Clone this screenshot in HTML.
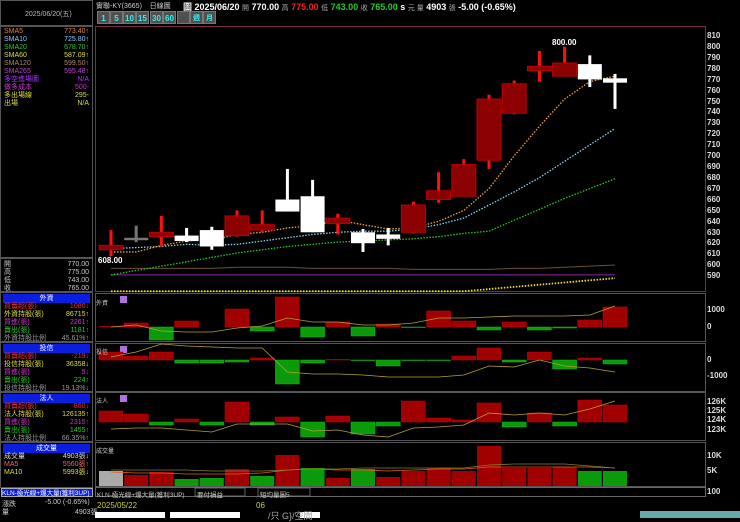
<!DOCTYPE html>
<html><head><meta charset="utf-8">
<style>
*{margin:0;padding:0;box-sizing:border-box}
body{width:740px;height:518px;background:#000;overflow:hidden;position:relative;font-family:"Liberation Sans","Noto Sans CJK TC",sans-serif;font-size:7px;color:#ccc}
.a{position:absolute;white-space:nowrap}
.lp{position:absolute;left:0;width:93px;border:1px solid #555}
.row{position:absolute;left:3px;right:3px;height:8px;line-height:8px;font-size:7px}
.row span{position:absolute;right:0}
.hd{position:absolute;left:2px;right:2px;height:9px;background:#0a1ee0;color:#fff;text-align:center;line-height:9px;font-size:7px}
.btn{position:absolute;top:11px;height:13px;width:13px;background:#505050;color:#3ee;font-size:8px;font-weight:bold;text-align:center;line-height:13px;border:1px solid #777}
.ax{position:absolute;left:707px;font-size:8px;line-height:10px;color:#ddd;font-weight:bold}
</style></head><body>
<div class="lp" style="top:0;height:26px"><div class="a" style="left:24px;top:8px;color:#bbb">2025/06/20(五)</div></div>
<div class="lp" style="top:26px;height:232px">
<div class="row" style="top:1px;color:#e08040">SMA5<span>773.40↑</span></div>
<div class="row" style="top:9px;color:#8cf">SMA10<span>725.80↑</span></div>
<div class="row" style="top:17px;color:#2c2">SMA20<span>678.70↑</span></div>
<div class="row" style="top:25px;color:#dd4">SMA60<span>587.09↑</span></div>
<div class="row" style="top:33px;color:#a86">SMA120<span>599.50↑</span></div>
<div class="row" style="top:41px;color:#b4c">SMA265<span>595.48↑</span></div>
<div class="row" style="top:49px;color:#a3f">多空進場圖<span>N/A</span></div>
<div class="row" style="top:57px;color:#c3c">做多成本<span>500-</span></div>
<div class="row" style="top:65px;color:#dd4">多出場線<span>295-</span></div>
<div class="row" style="top:73px;color:#dd4">出場<span>N/A</span></div>
</div>
<div class="lp" style="top:258px;height:34px;color:#ccc">
<div class="row" style="top:2px">開<span>770.00</span></div>
<div class="row" style="top:10px">高<span>775.00</span></div>
<div class="row" style="top:18px">低<span>743.00</span></div>
<div class="row" style="top:26px">收<span>765.00</span></div>
</div>
<div class="lp" style="top:292px;height:50px">
<div class="hd" style="top:1px">外資</div>
<div class="row" style="top:10px;color:#e33">買賣超(張)<span>1080↓</span></div>
<div class="row" style="top:18px;color:#dd4">外資持股(張)<span>86715↑</span></div>
<div class="row" style="top:26px;color:#c3c">買進(張)<span>2261↑</span></div>
<div class="row" style="top:34px;color:#2c2">賣出(張)<span>1181↑</span></div>
<div class="row" style="top:42px;color:#999">外資持股比例<span>45.61%↑</span></div>
</div>
<div class="lp" style="top:342px;height:50px">
<div class="hd" style="top:1px">投信</div>
<div class="row" style="top:10px;color:#e33">買賣超(張)<span>-219↓</span></div>
<div class="row" style="top:18px;color:#dd4">投信持股(張)<span>36358↓</span></div>
<div class="row" style="top:26px;color:#c3c">買進(張)<span>5↓</span></div>
<div class="row" style="top:34px;color:#2c2">賣出(張)<span>224↑</span></div>
<div class="row" style="top:42px;color:#999">投信持股比例<span>19.13%↓</span></div>
</div>
<div class="lp" style="top:392px;height:50px">
<div class="hd" style="top:1px">法人</div>
<div class="row" style="top:10px;color:#e33">買賣超(張)<span>860↓</span></div>
<div class="row" style="top:18px;color:#dd4">法人持股(張)<span>126135↑</span></div>
<div class="row" style="top:26px;color:#c3c">買進(張)<span>2315↑</span></div>
<div class="row" style="top:34px;color:#2c2">賣出(張)<span>1455↑</span></div>
<div class="row" style="top:42px;color:#999">法人持股比例<span>66.35%↑</span></div>
</div>
<div class="lp" style="top:442px;height:46px">
<div class="hd" style="top:1px">成交量</div>
<div class="row" style="top:10px;color:#ddd">成交量<span>4903張↓</span></div>
<div class="row" style="top:18px;color:#e66">MA5<span>5560張↑</span></div>
<div class="row" style="top:26px;color:#dd4">MA10<span>5993張↓</span></div>
</div>
<div class="a" style="left:1px;top:488px;width:92px;height:9px;background:#0a1ee0;color:#fff;font-size:6.5px;line-height:9px;border:1px solid #aaa">KLN-極光線+爆大量(獲利3UP)</div>
<div class="a" style="left:2px;top:499px;color:#ccc">漲跌</div><div class="a" style="left:45px;top:499px;color:#ccc">-5.00 (-0.65%)</div>
<div class="a" style="left:2px;top:507px;color:#ccc">量</div><div class="a" style="left:75px;top:507px;color:#ccc">4903張</div>

<div class="a" style="left:96px;top:1px;font-size:7px;color:#ccc">實聯-KY(3665)&nbsp;&nbsp;&nbsp;&nbsp;日線圖</div>
<div class="a" style="left:183px;top:0px;font-size:9px;font-weight:bold;color:#fff">圖 2025/06/20 <span style="font-size:7px;font-weight:normal;color:#aaa">開</span> 770.00 <span style="font-size:7px;font-weight:normal;color:#aaa">高</span> <span style="color:#e22">775.00</span> <span style="font-size:7px;font-weight:normal;color:#aaa">低</span> <span style="color:#2c2">743.00</span> <span style="font-size:7px;font-weight:normal;color:#aaa">收</span> <span style="color:#2c2">765.00</span> s <span style="font-size:7px;font-weight:normal;color:#aaa">元 量</span> 4903 <span style="font-size:7px;font-weight:normal;color:#aaa">張</span> -5.00 (-0.65%)</div>
<div class="btn" style="left:97px">1</div><div class="btn" style="left:110px">5</div><div class="btn" style="left:123px">10</div><div class="btn" style="left:136px">15</div><div class="btn" style="left:150px">30</div><div class="btn" style="left:163px">60</div><div class="btn" style="left:177px;color:#333">▫</div><div class="btn" style="left:190px;font-size:7px">週</div><div class="btn" style="left:203px;font-size:7px">月</div>

<svg class="a" style="left:0;top:0" width="740" height="518" id="s">
<rect x="95.5" y="26.5" width="610" height="265" fill="none" stroke="#7a2a4a"/>
<rect x="95.5" y="293.5" width="610" height="48" fill="none" stroke="#555"/>
<rect x="95.5" y="343.5" width="610" height="48" fill="none" stroke="#555"/>
<rect x="95.5" y="392.5" width="610" height="48" fill="none" stroke="#555"/>
<rect x="95.5" y="442.5" width="610" height="44" fill="none" stroke="#555"/>
<rect x="95.5" y="487.5" width="610" height="9" fill="none" stroke="#666"/>
<rect x="195" y="488" width="50" height="8" fill="#000" stroke="#888" stroke-width=".7"/>
<rect x="258" y="488" width="52" height="8" fill="#000" stroke="#888" stroke-width=".7"/>
<rect x="120" y="296" width="7" height="7" fill="#b070e0"/><rect x="120" y="346" width="7" height="7" fill="#b070e0"/><rect x="120" y="395" width="7" height="7" fill="#b070e0"/>
<rect x="95" y="512" width="70" height="6" fill="#fff"/><rect x="170" y="512" width="70" height="6" fill="#fff"/><rect x="300" y="512" width="20" height="6" fill="#fff"/>
<rect x="640" y="511" width="100" height="7" fill="#6aa"/>
</svg>
<div class="a" style="left:97px;top:489px;font-size:6.5px;color:#ccc">KLN-極光線+爆大量(獲利3UP)</div>
<div class="a" style="left:197px;top:489px;font-size:6.5px;color:#ccc">要付損益</div>
<div class="a" style="left:260px;top:489px;font-size:6.5px;color:#ccc">短均量圖5</div>
<div class="a" style="left:97px;top:501px;font-size:8px;color:#cc4">2025/05/22</div>
<div class="a" style="left:256px;top:501px;font-size:8px;color:#cc4">06</div>
<div class="a" style="left:268px;top:509px;font-size:9px;color:#aaa">/只 G}/空間</div>
<div class="a" style="left:96px;top:298px;font-size:6px;color:#ccc">外資</div>
<div class="a" style="left:96px;top:347px;font-size:6px;color:#ccc">投信</div>
<div class="a" style="left:96px;top:396px;font-size:6px;color:#ccc">法人</div>
<div class="a" style="left:96px;top:446px;font-size:6px;color:#ccc">成交量</div>
<div class="a" style="left:98px;top:256px;font-size:8px;font-weight:bold;color:#fff">608.00</div>
<div class="a" style="left:552px;top:38px;font-size:8px;font-weight:bold;color:#fff">800.00</div>
<div class="ax" style="top:31px">810</div><div class="ax" style="top:42px">800</div><div class="ax" style="top:53px">790</div><div class="ax" style="top:64px">780</div><div class="ax" style="top:75px">770</div><div class="ax" style="top:86px">760</div><div class="ax" style="top:97px">750</div><div class="ax" style="top:107px">740</div><div class="ax" style="top:118px">730</div><div class="ax" style="top:129px">720</div><div class="ax" style="top:140px">710</div><div class="ax" style="top:151px">700</div><div class="ax" style="top:162px">690</div><div class="ax" style="top:173px">680</div><div class="ax" style="top:184px">670</div><div class="ax" style="top:195px">660</div><div class="ax" style="top:206px">650</div><div class="ax" style="top:217px">640</div><div class="ax" style="top:228px">630</div><div class="ax" style="top:238px">620</div><div class="ax" style="top:249px">610</div><div class="ax" style="top:260px">600</div><div class="ax" style="top:271px">590</div>
<div class="ax" style="top:305px">1000</div><div class="ax" style="top:322px">0</div>
<div class="ax" style="top:355px">0</div><div class="ax" style="top:371px">-1000</div>
<div class="ax" style="top:397px">126K</div><div class="ax" style="top:406px">125K</div><div class="ax" style="top:415px">124K</div><div class="ax" style="top:425px">123K</div>
<div class="ax" style="top:451px">10K</div><div class="ax" style="top:466px">5K</div><div class="ax" style="top:487px">100</div>
<script>
var s=document.getElementById('s'),N='http://www.w3.org/2000/svg';
function el(t,a){var e=document.createElementNS(N,t);for(var k in a)e.setAttribute(k,a[k]);s.appendChild(e);return e}
function Y(p){return 134+(720-p)*1.092}
function X(i){return 111+25.2*i}
var C=[[614,618,632,608,1],[625,625,636,621,2],[626,630,645,617,1],[622,627,634,621,0],[617,632,635,614,0],[627,645,650,626,1],[632,637,650,630,1],[649,660,688,649,0],[630,663,678,630,0],[638,643,647,628,1],[620,630,633,612,0],[624,628,634,618,0],[630,655,658,629,1],[660,668,685,657,1],[663,692,697,663,1],[696,752,756,688,1],[739,766,769,738,1],[778,782,796,768,1],[773,785,800,773,1],[770,784,792,763,0],[767,771,775,743,0]];
function line(v,c,dash,w){var d='';v.forEach(function(p,i){d+=(i?'L':'M')+X(i)+','+Y(p)});el('path',{d:d,fill:'none',stroke:c,'stroke-width':w||1.3,'stroke-dasharray':dash||''})}
line([597,597,597,597,597,598,598,598,597,597,597,597,596,596,596,596,597,597,598,599,600],'#6b5030','',1);
line([591,591,591,591,591,591,591,591,591,591,591,591,591,591,591,591,591,591,591,591,591],'#8a2aa0','',1);
line([576,576,576,576,576,576,576,576,576,576,576,576,576,576,576,578,580,582,584,586,588],'#e8e030','1.5,1.5',1.8);
line([591,595,599,603,607,611,614,617,619,621,622,623,624,626,629,631,641,651,661,670,679],'#2c2','1.5,1.5');
line([615,616,617,619,618,619,622,625,628,630,631,631,633,637,643,655,667,680,695,710,725],'#8ad4f0','1.5,1.5');
line([612,612,618,622,623,628,630,634,636,641,637,633,634,640,650,670,700,727,752,768,773],'#f0a040','1.5,1.5');
C.forEach(function(c,i){var x=X(i),o=c[0],cl=c[1];var t=Y(Math.max(o,cl)),b=Y(Math.min(o,cl));
var col=c[4]==1?'#ff1010':(c[4]==2?'#777':'#fff');
el('rect',{x:x-1.5,y:Y(c[2]),width:3,height:Y(c[3])-Y(c[2]),fill:col});
el('rect',{x:x-12,y:t,width:24,height:Math.max(b-t,2.5),fill:c[4]==1?'#8b0000':col,stroke:c[4]==1?'#b00':'none'})});
function bars(z,v){v.forEach(function(h,i){if(!h)return;var x=X(i)-12;el('rect',{x:x,y:h>0?z-h:z,width:24,height:Math.abs(h),fill:h>0?'#a00000':'#0a9a0a',stroke:h>0?'#c00':'#1b1','stroke-width':.5})})}
bars(327,[.5,4,-13,6,0,18,-4,30,-10,5,-9,3,-.5,16,6,-3,5,-3,-1,7,20]);
bars(360,[8,4,8,-3,-3,-2,2,-24,-3,.5,-.5,-6,-.5,-.5,4,12,-2,8,-9,2,-4]);
bars(422,[11,8,-3,3,-3,20,-3,5,-15,6,-12,-4,21,4,2,19,-5,9,-4,22,17]);
function lin(v,c){var d='';v.forEach(function(p,i){d+=(i?'L':'M')+X(i)+','+p});el('path',{d:d,fill:'none',stroke:c,'stroke-width':.8})}
lin([327,325,331,332,332,328,326,318,322,322,325,325,323,318,318,317,316,316,316,315,306],'#b9a030');
lin([357,352,344,346,347,348,348,372,374,374,375,377,377,377,375,366,367,360,366,368,372],'#b9a030');
lin([429,428,428,430,432,424,424,424,431,430,435,437,428,427,425,413,415,413,415,409,401],'#b9a030');
var vv=[471,475,472,479,478,469,476,455,468,478,469,477,471,468,471,446,468,468,467,471,471],vc=['#aaa',1,1,0,0,1,0,1,0,1,0,1,1,1,1,1,1,1,1,0,0];
vv.forEach(function(t,i){el('rect',{x:X(i)-12,y:t,width:24,height:486-t,fill:vc[i]==='#aaa'?'#aaa':(vc[i]?'#a00000':'#0a9a0a')})});
lin([472,473,473,474,474,474,473,470,469,470,470,471,470,469,469,467,467,467,467,467,468],'#e06020');
lin([470,470,470,470,471,471,471,470,469,469,468,468,468,468,468,465,464,464,464,466,468],'#8a7a30');
</script>
</body></html>
